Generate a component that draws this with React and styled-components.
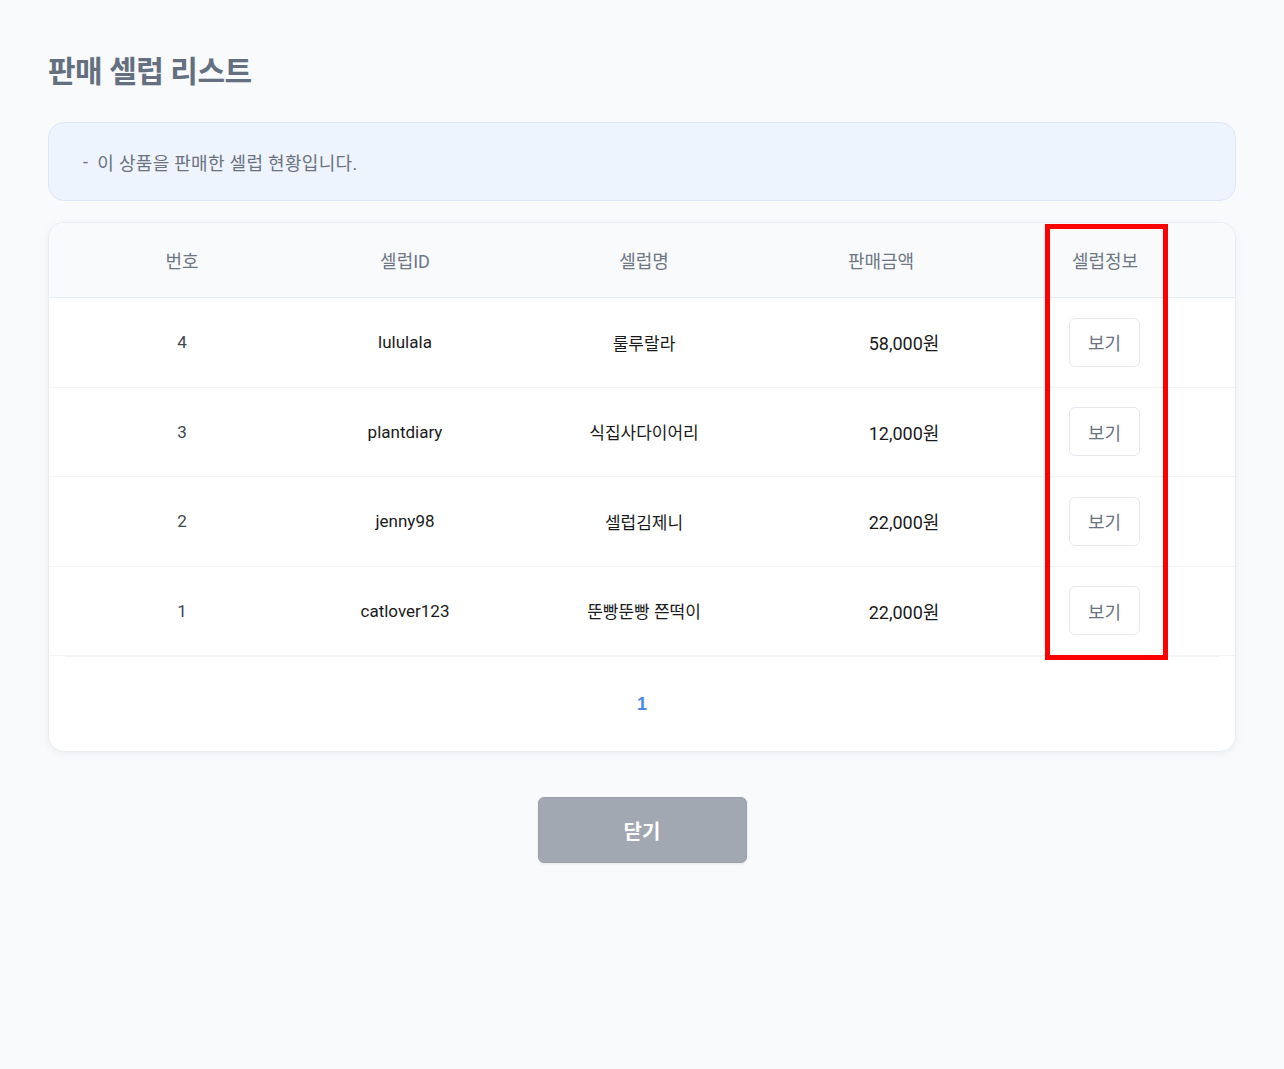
import React from 'react'
import styled, { createGlobalStyle } from 'styled-components'

const GlobalStyle = createGlobalStyle`
body {
    margin: 0;
    background-color: #f8fafc;
    font-family: Roboto, "Noto Sans CJK KR", sans-serif;
}
`

const Page = styled.div`
padding: 53px 48px 60px 48px;
min-height: 1069px;
box-sizing: border-box;
`

const Title = styled.h1`
margin: 0;
font-size: 30px;
line-height: 38px;
font-weight: 700;
color: #64707f;
letter-spacing: -0.5px;
`

const InfoBox = styled.div`
margin-top: 31px;
height: 79px;
box-sizing: border-box;
display: flex;
align-items: center;
padding: 0 34px;
background-color: #eef4fd;
border: 1px solid #dce7f6;
border-radius: 16px;
color: #6b7280;
font-size: 18px;
letter-spacing: 0.3px;
span{
    margin-right: 9px;
}
`

const CardWrap = styled.div`
position: relative;
margin-top: 21px;
`

const Card = styled.div`
background-color: #ffffff;
border: 1px solid #e9edf2;
border-radius: 16px;
overflow: hidden;
box-shadow: 0 2px 8px rgba(15, 23, 42, 0.05);
`

const Row = styled.div`
display: grid;
grid-template-columns: 266px 180px 298px 176px 1fr;
align-items: center;
height: ${props => props.$head ? '75px' : '89.5px'};
background-color: ${props => props.$head ? '#f8fafc' : '#ffffff'};
border-bottom: 1px solid ${props => props.$head ? '#e8ecf1' : '#f2f4f7'};
box-sizing: border-box;
font-size: ${props => props.$head ? '18px' : '17px'};
color: ${props => props.$head ? '#6e7784' : '#1a1a1a'};
&:last-of-type{
    border-bottom: none;
}
`

const Cell = styled.div`
text-align: center;
padding-left: ${props => props.$shift || 0}px;
font-size: ${props => props.$size ? props.$size + 'px' : 'inherit'};
color: ${props => props.$muted ? '#3f4651' : 'inherit'};
`

const ViewButton = styled.button`
width: 71px;
height: 49px;
background-color: #ffffff;
border: 1px solid #e5e8ec;
border-radius: 6px;
font-family: inherit;
font-size: 18px;
color: #6b7280;
cursor: pointer;
margin-left: -1px;
`

const Pagination = styled.div`
margin: 0 16px;
height: 94px;
border-top: 1px solid #f2f4f7;
display: flex;
align-items: center;
justify-content: center;
`

const PageNum = styled.span`
font-family: "Liberation Sans", Arial, sans-serif;
font-weight: 700;
font-size: 18px;
color: #4a86e8;
`

const Highlight = styled.div`
position: absolute;
left: 997px;
top: 2px;
width: 123px;
height: 436px;
border: 5px solid #ff0000;
box-sizing: border-box;
pointer-events: none;
`

const Footer = styled.div`
display: flex;
justify-content: center;
margin-top: 45px;
`

const CloseButton = styled.button`
width: 209px;
height: 66px;
background-color: #a2a8b2;
border: 1px solid #9aa1ab;
border-radius: 6px;
color: #ffffff;
font-family: inherit;
font-size: 20px;
font-weight: 700;
cursor: pointer;
box-shadow: 0 1px 3px rgba(0, 0, 0, 0.08);
`

const sellers = [
    { no: 4, id: 'lululala', name: '룰루랄라', amount: '58,000원' },
    { no: 3, id: 'plantdiary', name: '식집사다이어리', amount: '12,000원' },
    { no: 2, id: 'jenny98', name: '셀럽김제니', amount: '22,000원' },
    { no: 1, id: 'catlover123', name: '뚠빵뚠빵 쯘떡이', amount: '22,000원' },
]

function App() {
    return (
        <Page>
            <GlobalStyle />
            <Title>판매 셀럽 리스트</Title>
            <InfoBox>
                <span>-</span>이 상품을 판매한 셀럽 현황입니다.
            </InfoBox>
            <CardWrap>
                <Card>
                    <Row $head>
                        <Cell>번호</Cell>
                        <Cell>셀럽ID</Cell>
                        <Cell>셀럽명</Cell>
                        <Cell>판매금액</Cell>
                        <Cell $shift={6}>셀럽정보</Cell>
                    </Row>
                    {sellers.map(s => (
                        <Row key={s.no}>
                            <Cell $muted>{s.no}</Cell>
                            <Cell>{s.id}</Cell>
                            <Cell>{s.name}</Cell>
                            <Cell $shift={46} $size={18}>{s.amount}</Cell>
                            <Cell $shift={6}><ViewButton>보기</ViewButton></Cell>
                        </Row>
                    ))}
                    <Pagination>
                        <PageNum>1</PageNum>
                    </Pagination>
                </Card>
                <Highlight />
            </CardWrap>
            <Footer>
                <CloseButton>닫기</CloseButton>
            </Footer>
        </Page>
    )
}

export default App
